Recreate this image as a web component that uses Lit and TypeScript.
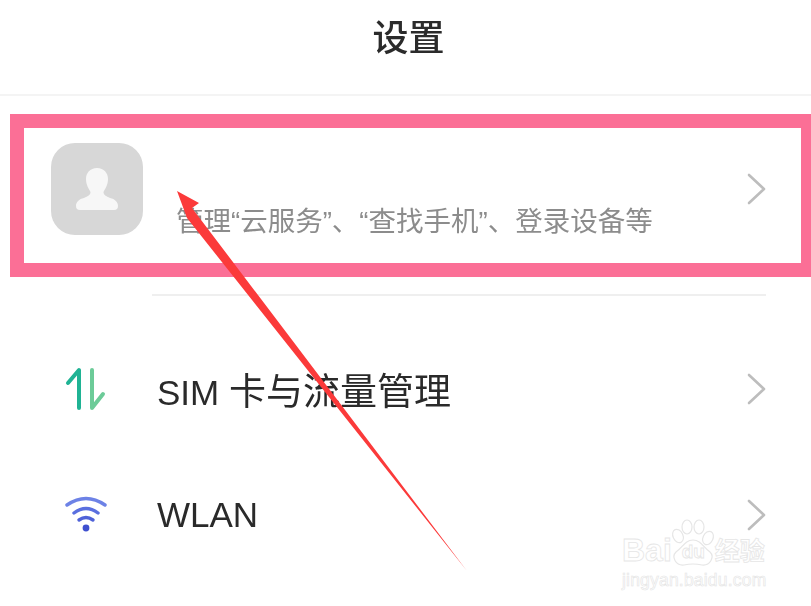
import { LitElement, html, css } from "lit";
import { customElement } from "lit/decorators.js";

const chevron = html`<svg class="chevron" width="20" height="32" viewBox="0 0 20 32" fill="none">
  <path d="M2 2 L17 16 L2 30" stroke="#bdbdbd" stroke-width="2.6" stroke-linecap="round" stroke-linejoin="round" />
</svg>`;

@customElement("app-root")
export class AppRoot extends LitElement {
  static styles = css`
    :host {
      display: block;
      width: 811px;
      height: 606px;
      position: relative;
      overflow: hidden;
      background: #fff;
      font-family: "Liberation Sans", "Noto Sans CJK SC", sans-serif;
    }

    .page {
      display: flex;
      flex-direction: column;
      filter: blur(0.5px);
    }

    .title-bar {
      height: 96px;
      border-bottom: 2px solid #f4f4f4;
      display: flex;
      align-items: center;
      justify-content: center;
      padding: 0 0 24px 6px;
      box-sizing: border-box;
      font-size: 36px;
      font-weight: 500;
      color: #2b2b2b;
    }

    .account {
      margin: 18px 0 0 10px;
      height: 163px;
      box-sizing: border-box;
      border: solid #fb6f96;
      border-width: 14px 10px 14px 14px;
      display: flex;
      align-items: flex-start;
      padding: 15px 34px 0 27px;
    }

    .avatar {
      width: 92px;
      height: 92px;
      flex: none;
      border-radius: 24px;
      background: #d7d7d7;
      display: flex;
      align-items: center;
      justify-content: center;
    }

    .account-sub {
      flex: 1;
      margin: 62px 0 0 33px;
      font-size: 27.5px;
      line-height: 34px;
      color: #8c8c8c;
      white-space: nowrap;
    }

    .account .chevron {
      margin-top: 30px;
      flex: none;
    }

    .divider {
      height: 2px;
      margin: 17px 45px 0 152px;
      background: #efefef;
    }

    .row {
      display: flex;
      align-items: center;
      height: 123px;
      padding: 0 44px 0 65px;
      font-size: 35px;
      color: #2a2a2a;
    }

    .row.sim {
      margin-top: 31px;
    }

    .row.wlan {
      margin-top: 3px;
    }

    .row-icon {
      width: 42px;
      flex: none;
      margin-right: 50px;
      display: flex;
    }

    .row-label {
      flex: 1;
      white-space: pre;
    }

    .cjk {
      font-size: 37px;
    }

    .arrow {
      position: absolute;
      left: 0;
      top: 0;
    }

    .mark {
      position: absolute;
      left: 622px;
      top: 519px;
      width: 150px;
      color: transparent;
      -webkit-text-stroke: 0.8px #e6e6e6;
    }

    .mark-line {
      display: flex;
      align-items: flex-end;
      height: 48px;
      font-size: 32px;
      line-height: 34px;
      font-weight: 700;
    }

    .mark-du {
      width: 43px;
      flex: none;
      font-size: 19px;
      line-height: 30px;
      text-align: center;
    }

    .mark-cn {
      font-size: 25px;
      line-height: 32px;
      white-space: nowrap;
    }

    .mark-url {
      font-size: 17.5px;
      line-height: 22px;
      margin-top: 2px;
      letter-spacing: 0.2px;
      white-space: nowrap;
      -webkit-text-stroke: 0.6px #e4e4e4;
    }

    .paw {
      position: absolute;
      left: 47px;
      top: 0;
    }
  `;

  render() {
    return html`
      <div class="page">
        <div class="title-bar">设置</div>
        <div class="account">
          <div class="avatar">
            <svg width="42" height="42" viewBox="0 0 42 42" fill="#f7f7f7">
              <path d="M21 0 C28 0 32 5 32 11 C32 17 29 21 27.5 24 C27.5 27 30 28 34 30 C39 31 42 34 42 38 Q42 42 38 42 L4 42 Q0 42 0 38 C0 34 3 31 8 30 C12 28 14.5 27 14.5 24 C13 21 10 17 10 11 C10 5 14 0 21 0 Z" />
            </svg>
          </div>
          <div class="account-sub">管理“云服务”、“查找手机”、登录设备等</div>
          ${chevron}
        </div>
        <div class="divider"></div>
        <div class="row sim">
          <div class="row-icon">
            <svg width="42" height="44" viewBox="0 0 42 44" fill="none" stroke-width="4" stroke-linecap="round" stroke-linejoin="round">
              <path d="M3 16 L14 3 L14 41" stroke="#1fb394" />
              <path d="M27 3 L27 41 L38 27" stroke="#6ccb98" />
            </svg>
          </div>
          <div class="row-label">SIM <span class="cjk">卡与流量管理</span></div>
          ${chevron}
        </div>
        <div class="row wlan">
          <div class="row-icon">
            <svg width="42" height="40" viewBox="0 0 42 40" fill="none" stroke-width="3.4" stroke-linecap="round">
              <path d="M2 10 Q21 -3 40 10" stroke="#6d82e6" />
              <path d="M9 18 Q21 9 33 18" stroke="#5a6fdf" />
              <path d="M14 25 Q21 20 28 25" stroke="#4f62d8" />
              <circle cx="21" cy="33" r="3.4" fill="#3f50cf" stroke="none" />
            </svg>
          </div>
          <div class="row-label">WLAN</div>
          ${chevron}
        </div>
      </div>

      <svg class="arrow" width="811" height="606" viewBox="0 0 811 606">
        <path d="M177 191 L199 203 L192 208 L467 571 L187 218 Z" fill="#fb3a3a" />
      </svg>

      <div class="mark">
        <svg class="paw" width="50" height="48" viewBox="0 0 50 48" fill="none" stroke="#e6e6e6" stroke-width="1.2">
          <ellipse cx="9" cy="17" rx="5" ry="7" transform="rotate(-25 9 17)" />
          <ellipse cx="18" cy="8" rx="5" ry="7" />
          <ellipse cx="30" cy="8" rx="5" ry="7" />
          <ellipse cx="39" cy="19" rx="5" ry="7" transform="rotate(25 39 19)" />
          <path d="M24 21 C32 21 34 28 41 33 C46 38 41 47 33 46 Q24 44 15 46 C7 47 2 38 7 33 C14 28 16 21 24 21 Z" />
        </svg>
        <div class="mark-line">
          <span>Bai</span><span class="mark-du">du</span><span class="mark-cn">经验</span>
        </div>
        <div class="mark-url">jingyan.baidu.com</div>
      </div>
    `;
  }
}

declare global {
  interface HTMLElementTagNameMap {
    "app-root": AppRoot;
  }
}
